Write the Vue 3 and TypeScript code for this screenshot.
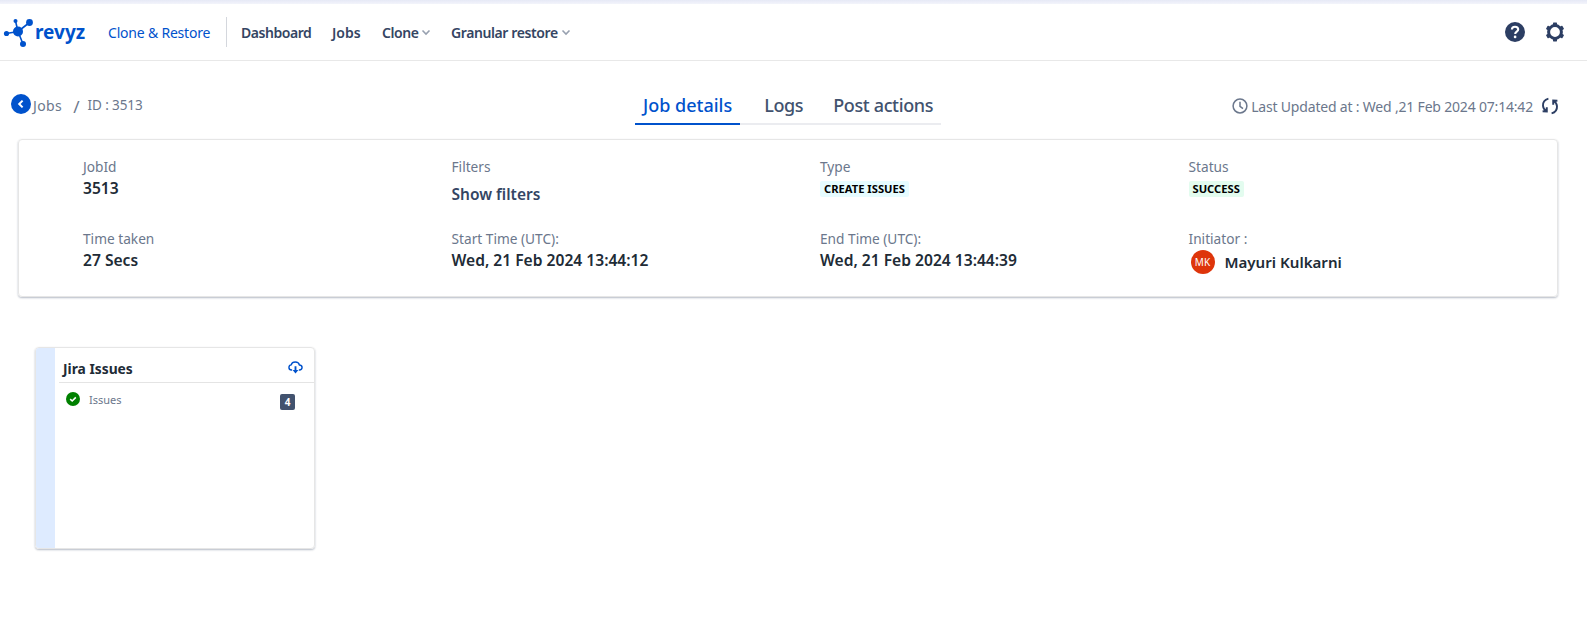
<script setup lang="ts">
interface Field { label: string; value?: string; kind?: string }
const fields: Field[] = [
  { label: 'JobId', value: '3513' },
  { label: 'Filters', value: 'Show filters', kind: 'link' },
  { label: 'Type', value: 'CREATE ISSUES', kind: 'type' },
  { label: 'Status', value: 'SUCCESS', kind: 'status' },
  { label: 'Time taken', value: '27 Secs' },
  { label: 'Start Time (UTC):', value: 'Wed, 21 Feb 2024 13:44:12' },
  { label: 'End Time (UTC):', value: 'Wed, 21 Feb 2024 13:44:39' },
  { label: 'Initiator :', value: 'Mayuri Kulkarni', kind: 'user' },
]
</script>

<template>
  <div class="page">
    <div class="topband"></div>
    <header class="nav">
      <div class="logo">
        <svg width="32" height="32" viewBox="0 0 32 32" class="logo-mark">
          <g fill="#0052cc" stroke="#0052cc">
            <path d="M5.5 17.5 L17 15.5 M14.5 5 L17 15.5 M28.5 6.5 L17 15.5 M22 28 L17 15.5" stroke-width="1.6" fill="none" />
            <circle cx="17" cy="15.5" r="5" stroke="none" />
            <circle cx="5.5" cy="17.5" r="2.6" stroke="none" />
            <circle cx="14.5" cy="5" r="2" stroke="none" />
            <circle cx="28.5" cy="6.5" r="3.4" stroke="none" />
            <circle cx="22" cy="28" r="3" stroke="none" />
          </g>
        </svg>
        <span class="logo-text">revyz</span>
      </div>
      <span class="product">Clone &amp; Restore</span>
      <span class="divider"></span>
      <nav class="menu">
        <a class="dash">Dashboard</a>
        <a class="jobs">Jobs</a>
        <a class="drop clone">Clone
          <svg width="12" height="12" viewBox="0 0 12 12"><path d="M2.5 4.5 L6 8 L9.5 4.5" fill="none" stroke="#97a0af" stroke-width="1.6" /></svg>
        </a>
        <a class="drop granular">Granular restore
          <svg width="12" height="12" viewBox="0 0 12 12"><path d="M2.5 4.5 L6 8 L9.5 4.5" fill="none" stroke="#97a0af" stroke-width="1.6" /></svg>
        </a>
      </nav>
      <div class="nav-icons">
        <svg width="22" height="22" viewBox="0 0 22 22">
          <circle cx="11" cy="11" r="10" fill="#2c3e63" />
          <path d="M7.9 8.6 C7.9 6.8 9.3 5.7 11 5.7 C12.8 5.7 14.2 6.8 14.2 8.5 C14.2 10.6 11.2 10.7 11.2 12.9" fill="none" stroke="#fff" stroke-width="2.1" />
          <circle cx="11.1" cy="15.9" r="1.35" fill="#fff" />
        </svg>
        <svg width="20" height="20" viewBox="0 0 20 20">
          <circle cx="10" cy="10" r="6.4" fill="none" stroke="#2c3e63" stroke-width="3" />
          <g fill="#2c3e63">
            <rect x="8" y="0.6" width="4" height="3.4" rx=".6" />
            <rect x="8" y="16" width="4" height="3.4" rx=".6" />
            <rect x="8" y="0.6" width="4" height="3.4" rx=".6" transform="rotate(60 10 10)" />
            <rect x="8" y="0.6" width="4" height="3.4" rx=".6" transform="rotate(120 10 10)" />
            <rect x="8" y="0.6" width="4" height="3.4" rx=".6" transform="rotate(240 10 10)" />
            <rect x="8" y="0.6" width="4" height="3.4" rx=".6" transform="rotate(300 10 10)" />
          </g>
        </svg>
      </div>
    </header>

    <section class="subbar">
      <div class="crumbs">
        <span class="back">
          <svg width="20" height="20" viewBox="0 0 20 20">
            <circle cx="10" cy="10" r="10" fill="#0052cc" />
            <path d="M11.6 6.6 L8.2 10 L11.6 13.4" fill="none" stroke="#fff" stroke-width="2" />
          </svg>
        </span>
        <span class="crumb-jobs">Jobs</span>
        <span class="slash">/</span>
        <span class="crumb-id">ID : 3513</span>
      </div>
      <div class="tabs">
        <span class="tab active">Job details</span>
        <span class="tab logs">Logs</span>
        <span class="tab post">Post actions</span>
      </div>
      <div class="updated">
        <svg width="16" height="16" viewBox="0 0 16 16">
          <circle cx="8" cy="8" r="6.9" fill="none" stroke="#6b778c" stroke-width="1.5" />
          <path d="M8 3.8 V8.3 L11 10.6" fill="none" stroke="#6b778c" stroke-width="1.5" />
        </svg>
        <span class="updated-text">Last Updated at : Wed ,21 Feb 2024 07:14:42</span>
        <svg width="18" height="18" viewBox="0 0 18 18" class="refresh">
          <path d="M7.4 1.6 C3.8 2.6 1.8 5.4 2 8.8 C2.1 11 3.3 12.8 5.4 14 M1.6 14.2 L5.8 14.4 L5.8 10.2" fill="none" stroke="#2c3e63" stroke-width="1.9" />
          <path d="M10.6 16.4 C14.2 15.4 16.2 12.6 16 9.2 C15.9 7 14.7 5.2 12.6 4 M16.4 3.8 L12.2 3.6 L12.2 7.8" fill="none" stroke="#2c3e63" stroke-width="1.9" />
        </svg>
      </div>
    </section>

    <section class="summary">
      <div v-for="f in fields" :key="f.label" class="field">
        <div class="label">{{ f.label }}</div>
        <div v-if="f.kind === 'link'" class="link">{{ f.value }}</div>
        <div v-else-if="f.kind === 'type'" class="tag-row"><span class="tag tag-type">{{ f.value }}</span></div>
        <div v-else-if="f.kind === 'status'" class="tag-row"><span class="tag tag-status">{{ f.value }}</span></div>
        <div v-else-if="f.kind === 'user'" class="user">
          <span class="avatar">MK</span>
          <span class="user-name">{{ f.value }}</span>
        </div>
        <div v-else class="value">{{ f.value }}</div>
      </div>
    </section>

    <section class="job-wrap">
      <article class="job-card">
        <div class="stripe"></div>
        <div class="job-body">
          <div class="job-head">
            <span class="job-title">Jira Issues</span>
            <svg width="15" height="15" viewBox="0 0 16 16" class="cloud">
              <path d="M4.4 10.6 H3.9 C2.3 10.6 1 9.5 1 7.9 C1 6.5 2 5.4 3.4 5.2 C3.9 3.3 5.6 2.2 7.7 2.2 C10 2.2 11.8 3.6 12.2 5.4 C13.8 5.5 15 6.6 15 8 C15 9.5 13.7 10.6 12.1 10.6 H11.6" fill="none" stroke="#0052cc" stroke-width="1.5" />
              <path d="M8 6.6 V12" stroke="#0052cc" stroke-width="2" fill="none" />
              <path d="M4.9 10.6 H11.1 L8 14.4 Z" fill="#0052cc" />
            </svg>
          </div>
          <div class="job-row">
            <svg width="14" height="14" viewBox="0 0 14 14" class="ok">
              <circle cx="7" cy="7" r="7" fill="#008000" />
              <path d="M4.2 7.2 L6.2 9 L9.8 5.4" fill="none" stroke="#fff" stroke-width="1.6" />
            </svg>
            <span class="job-name">Issues</span>
            <span class="count">4</span>
          </div>
        </div>
      </article>
    </section>
  </div>
</template>

<style>
html, body { margin: 0; background: #fff; }
</style>

<style scoped>
.page {
  width: 1587px;
  height: 632px;
  overflow: hidden;
  background: #fff;
  font-family: "Noto Sans", "Open Sans", sans-serif;
  color: #172b4d;
}
.topband { height: 4px; background: linear-gradient(#e6e9f6, #f3f4fb); }
.nav {
  height: 56px;
  display: flex;
  align-items: center;
  border-bottom: 1px solid #e8e8e8;
  box-sizing: content-box;
}
.logo { display: flex; align-items: center; width: 108px; flex: none; }
.logo-mark { margin: 0 2px 0 1px; flex: none; }
.logo-text { font-size: 19px; font-weight: 700; color: #0052cc; line-height: 1; }
.product { font-size: 14px; letter-spacing: -0.2px; color: #0052cc; width: 118px; flex: none; white-space: nowrap; }
.divider { width: 1px; height: 30px; background: #d4d7dd; flex: none; }
.menu { display: flex; align-items: center; margin-left: 14px; font-size: 14px; font-weight: 600; color: #344563; white-space: nowrap; letter-spacing: -0.45px; }
.menu a { flex: none; }
.dash { width: 91px; }
.jobs { width: 50px; letter-spacing: 0; }
.clone { width: 69px; }
.granular { letter-spacing: -0.4px; }
.menu .drop { display: inline-flex; align-items: center; gap: 2px; }
.nav-icons { margin-left: auto; margin-right: 22px; display: flex; align-items: center; gap: 19px; }

.subbar {
  height: 78px;
  display: grid;
  grid-template-columns: 635px 306px 1fr;
  align-items: start;
}
.crumbs { display: flex; align-items: center; padding: 35px 0 0 11px; font-size: 14px; color: #6b778c; height: 20px; }
.crumb-jobs { margin-left: 2px; letter-spacing: .4px; position: relative; top: -1px; }
.slash { margin: 0 8px 0 11px; font-size: 17px; }
.crumb-id { font-size: 13.5px; letter-spacing: -0.1px; position: relative; top: -1px; }
.tabs { display: flex; gap: 16px; padding-top: 31px; box-shadow: inset 0 -2px 0 #ebecf0; height: 33px; box-sizing: content-box; }
.tab { font-size: 18px; font-weight: 500; color: #42526e; padding: 0 8px; line-height: 27px; height: 33px; box-sizing: border-box; white-space: nowrap; }
.tab.logs { letter-spacing: -0.4px; }
.tab.post { letter-spacing: -0.35px; margin-left: -2px; }
.tab.active { color: #0052cc; border-bottom: 2px solid #0052cc; }
.updated { display: flex; align-items: center; justify-content: flex-end; padding: 36px 28px 0 0; color: #6b778c; font-size: 14px; letter-spacing: -0.19px; height: 18px; white-space: nowrap; }
.updated > svg { flex: none; }
.updated-text { margin-left: 3px; }
.refresh { margin-left: 8px; }

.summary {
  margin: 0 29px 0 18px;
  height: 158px;
  box-sizing: border-box;
  padding: 18px 0 0 64px;
  border: 1px solid #e6e6e6;
  border-radius: 4px;
  box-shadow: 0 1px 2px rgba(9, 30, 66, .3);
  display: grid;
  grid-template-columns: repeat(4, 368.5px);
  grid-auto-rows: 72px;
}
.field { min-width: 0; }
.label { font-size: 13.7px; color: #6b778c; line-height: 18px; }
.value { font-size: 15.6px; font-weight: 600; color: #212b36; line-height: 22px; margin-top: 1px; }
.link { font-size: 15.5px; font-weight: 600; color: #344563; line-height: 22px; margin-top: 7px; }
.tag-row { margin-top: 5px; line-height: 14px; display: flex; }
.tag { font-size: 11.2px; font-weight: 700; color: #000; padding: 1px 4px; border-radius: 2px; line-height: 14px; white-space: nowrap; }
.tag-type { background: #e6fcff; }
.tag-status { background: #e3fcef; }
.user { display: flex; align-items: center; margin-top: 2px; padding-left: 2px; }
.avatar { width: 24px; height: 24px; border-radius: 50%; background: #de350b; color: #fff; font-size: 10px; display: flex; align-items: center; justify-content: center; flex: none; }
.user-name { margin-left: 10px; font-size: 15.1px; font-weight: 600; color: #212b36; }

.job-wrap { padding: 50px 0 0 35px; }
.job-card {
  width: 280px;
  height: 202px;
  box-sizing: border-box;
  display: flex;
  border: 1px solid #e6e6e6;
  border-radius: 4px;
  box-shadow: 0 1px 2px rgba(9, 30, 66, .3);
  overflow: hidden;
}
.stripe { width: 19px; background: #deebff; flex: none; }
.job-body { flex: 1; padding-left: 4px; }
.job-head { height: 31px; display: flex; align-items: flex-end; justify-content: space-between; border-bottom: 1px solid #e4e4e4; padding: 0 5px 3px 4px; box-sizing: content-box; }
.job-title { font-size: 13.8px; font-weight: 700; color: #212b36; line-height: 20px; }
.cloud { margin: 0 6px 4px 0; flex: none; }
.job-row { display: flex; align-items: flex-start; padding: 9px 19px 0 7px; }
.ok { flex: none; }
.job-name { margin-left: 9px; margin-top: -1px; font-size: 11px; color: #6b778c; line-height: 17px; }
.count { margin-left: auto; margin-top: 2px; width: 15px; height: 16px; border-radius: 2px; background: #42526e; color: #fff; font-size: 10px; font-weight: 700; display: flex; align-items: center; justify-content: center; }
</style>
